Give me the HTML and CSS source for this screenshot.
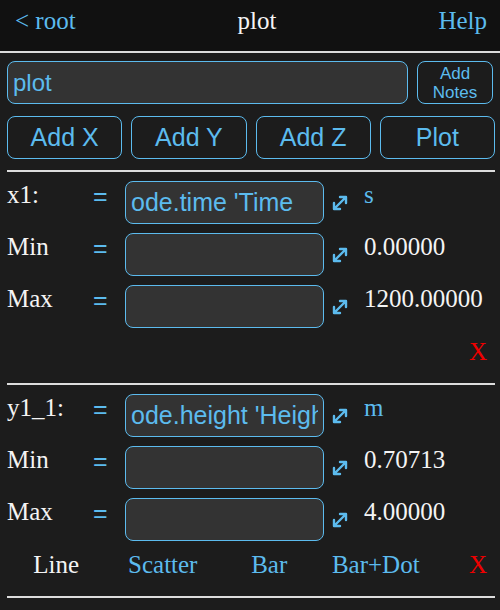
FILE: index.html
```html
<!DOCTYPE html>
<html>
<head>
<meta charset="utf-8">
<link rel="stylesheet" href="styles.css">
</head>
<body>
<header class="topbar">
  <span class="link">&lt; root</span>
  <span class="title">plot</span>
  <span class="link">Help</span>
</header>
<main class="content">
  <div class="title-row">
    <input class="field title-field" type="text" value="plot">
    <button class="btn notes-btn">Add<br>Notes</button>
  </div>
  <div class="btn-row">
    <button class="btn big-btn">Add X</button>
    <button class="btn big-btn">Add Y</button>
    <button class="btn big-btn">Add Z</button>
    <button class="btn big-btn">Plot</button>
  </div>

  <section class="axis">
    <div class="grid">
      <span class="label">x1:</span>
      <span class="eq">=</span>
      <input class="field" type="text" value="ode.time 'Time">
      <svg class="arrow" viewBox="0 0 16 16"><path d="M2.5 13.5 L13.5 2.5 M2 8 V14 H8 M8 2 H14 V8"/></svg>
      <span class="unit">s</span>

      <span class="label">Min</span>
      <span class="eq">=</span>
      <input class="field" type="text" value="">
      <svg class="arrow" viewBox="0 0 16 16"><path d="M2.5 13.5 L13.5 2.5 M2 8 V14 H8 M8 2 H14 V8"/></svg>
      <span class="value">0.00000</span>

      <span class="label">Max</span>
      <span class="eq">=</span>
      <input class="field" type="text" value="">
      <svg class="arrow" viewBox="0 0 16 16"><path d="M2.5 13.5 L13.5 2.5 M2 8 V14 H8 M8 2 H14 V8"/></svg>
      <span class="value">1200.00000</span>
    </div>
    <div class="action-row">
      <span class="del">X</span>
    </div>
  </section>

  <section class="axis">
    <div class="grid">
      <span class="label">y1_1:</span>
      <span class="eq">=</span>
      <input class="field" type="text" value="ode.height 'Height'">
      <svg class="arrow" viewBox="0 0 16 16"><path d="M2.5 13.5 L13.5 2.5 M2 8 V14 H8 M8 2 H14 V8"/></svg>
      <span class="unit">m</span>

      <span class="label">Min</span>
      <span class="eq">=</span>
      <input class="field" type="text" value="">
      <svg class="arrow" viewBox="0 0 16 16"><path d="M2.5 13.5 L13.5 2.5 M2 8 V14 H8 M8 2 H14 V8"/></svg>
      <span class="value">0.70713</span>

      <span class="label">Max</span>
      <span class="eq">=</span>
      <input class="field" type="text" value="">
      <svg class="arrow" viewBox="0 0 16 16"><path d="M2.5 13.5 L13.5 2.5 M2 8 V14 H8 M8 2 H14 V8"/></svg>
      <span class="value">4.00000</span>
    </div>
    <div class="action-row styles">
      <span class="opt active">Line</span>
      <span class="opt">Scatter</span>
      <span class="opt">Bar</span>
      <span class="opt">Bar+Dot</span>
      <span class="del">X</span>
    </div>
  </section>
  <div class="end-line"></div>
</main>
</body>
</html>
```

FILE: styles.css
```css
* { box-sizing: border-box; }

html, body {
  margin: 0;
  padding: 0;
  background: #1c1c1c;
  color: #f4f4f4;
  font-family: "Liberation Serif", "Times New Roman", serif;
  font-size: 25px;
  width: 500px;
  height: 610px;
  overflow: hidden;
}

.topbar {
  height: 53px;
  background: #111;
  border-bottom: 2px solid #dcdcdc;
  display: flex;
  justify-content: space-between;
  align-items: flex-start;
  padding: 7px 13px 0 15px;
}

.link { color: #5cbbee; }
.title { color: #f4f4f4; }

.content {
  padding: 8px 5px 0 7px;
}

.field {
  height: 43px;
  background: #333;
  border: 1.5px solid #5cbbee;
  border-radius: 8px;
  color: #5cbbee;
  font-family: "Liberation Sans", Arial, sans-serif;
  font-size: 25px;
  padding: 0 5px;
  outline: none;
  min-width: 0;
  width: 100%;
}

.title-row {
  display: flex;
  gap: 9px;
  padding-right: 2px;
}

.title-field {
  flex: 1;
  font-size: 24px;
}

.btn {
  background: #1c1c1c;
  border: 1.5px solid #5cbbee;
  border-radius: 8px;
  color: #5cbbee;
  font-family: "Liberation Sans", Arial, sans-serif;
  padding: 0;
  height: 43px;
}

.notes-btn {
  width: 76px;
  font-size: 17px;
  line-height: 19px;
}

.btn-row {
  display: grid;
  grid-template-columns: repeat(4, 1fr);
  gap: 9px;
  margin-top: 12px;
  margin-bottom: 11px;
}

.big-btn { font-size: 25px; }

.axis {
  border-top: 2px solid #dcdcdc;
  padding: 9px 0 17px;
}

.grid {
  display: grid;
  grid-template-columns: 86px 32px 199px 40px 1fr;
  grid-auto-rows: 43px;
  row-gap: 9px;
  align-items: start;
}

.label { line-height: 29px; margin-top: -1px; }

.eq {
  color: #5cbbee;
  font-family: "Liberation Sans", Arial, sans-serif;
  line-height: 29px;
  margin-top: 1px;
}

.arrow {
  width: 16px;
  height: 16px;
  margin-left: 8px;
  align-self: center;
  fill: none;
  stroke: #5cbbee;
  stroke-width: 2.4;
  stroke-linecap: round;
  stroke-linejoin: round;
}

.unit { color: #5cbbee; line-height: 29px; margin-top: -1px; }
.value { line-height: 29px; margin-top: -1px; }

.action-row {
  display: flex;
  justify-content: flex-end;
  margin-top: 9px;
  line-height: 29px;
}

.action-row.styles {
  display: grid;
  grid-template-columns: repeat(4, 106.5px) 1fr;
  margin-left: -4px;
}

.opt {
  color: #5cbbee;
  text-align: center;
}

.opt.active { color: #f4f4f4; }

.del {
  color: #ee0000;
  justify-self: end;
  margin-right: 8px;
}

.end-line {
  border-top: 2px solid #dcdcdc;
}
```
